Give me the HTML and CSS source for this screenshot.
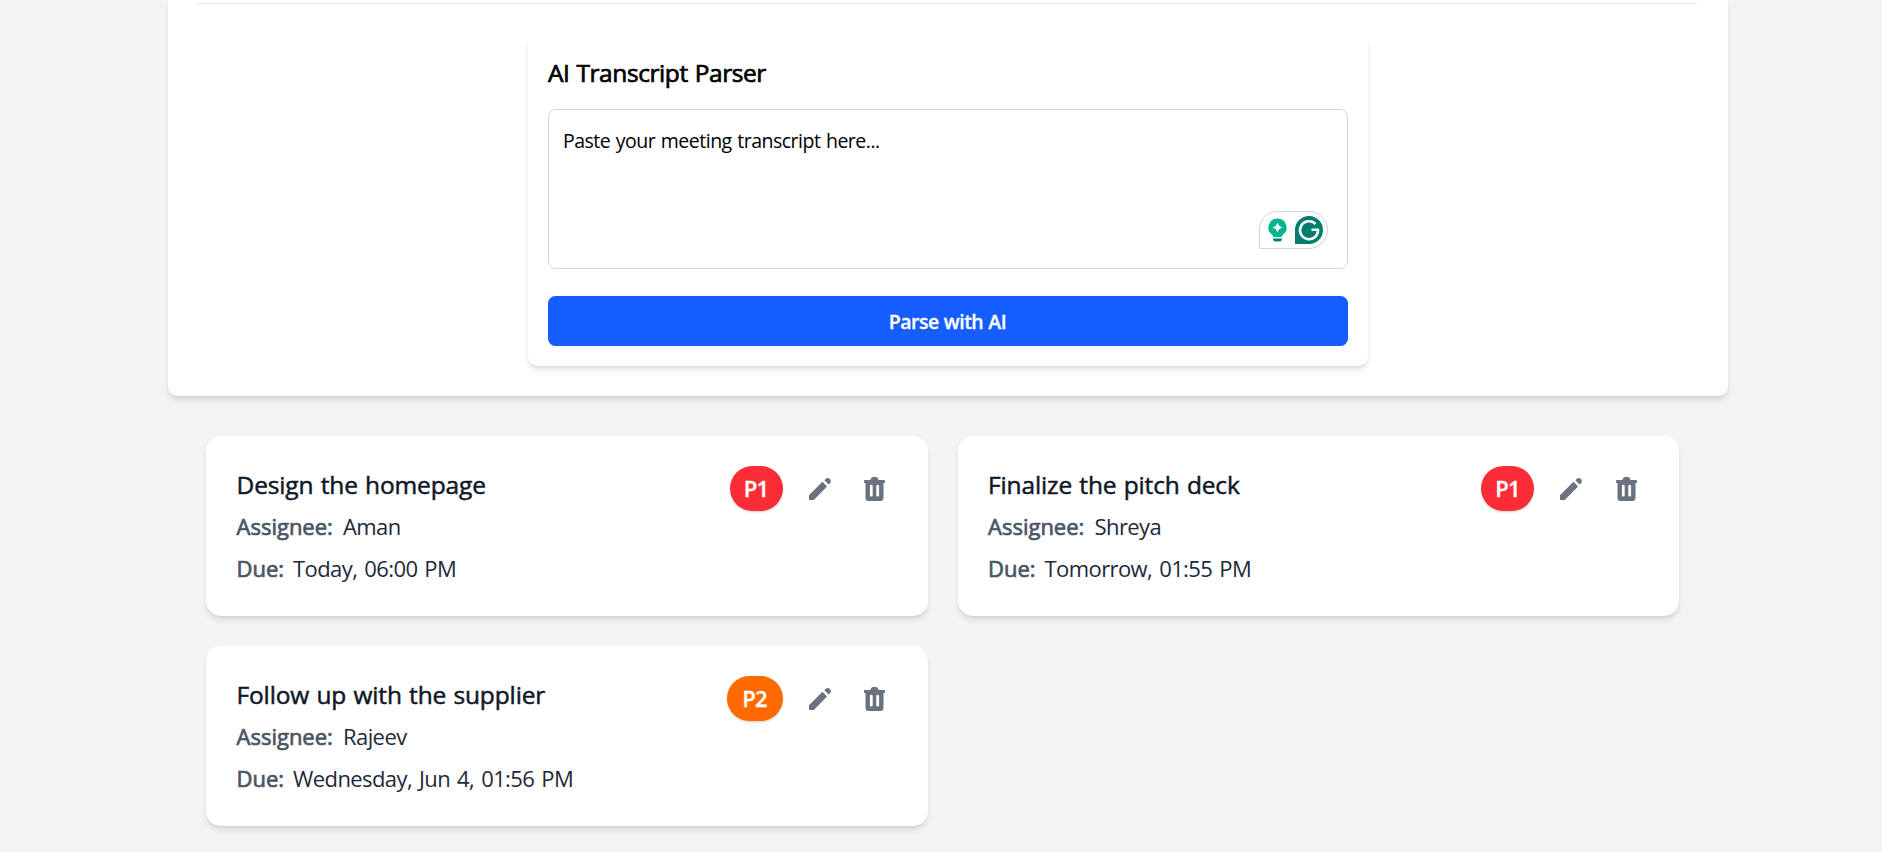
FILE: index.html
```html
<!DOCTYPE html>
<html lang="en">
<head>
<meta charset="utf-8">
<title>AI Task Manager</title>
<link rel="stylesheet" href="styles.css">
</head>
<body>
<svg class="sprite" aria-hidden="true">
  <symbol id="pencil" viewBox="0 0 24 24"><path d="M1 18.2 13.9 5.3a.8.8 0 0 1 1.1 0l3.6 3.6a.8.8 0 0 1 0 1.100L5.800 23H1.700a.7.700 0 0 1-.7-.7ZM16.300 3.200 17.800 1.800C19.100.700 20.900.800 22 2s1.200 2.900 0 4.200L20.600 7.500Z"/></symbol>
  <symbol id="trash" viewBox="0 0 21 24"><path fill-rule="evenodd" d="M6.200 3 7.500.8Q8 0 9 0h3q1 0 1.500.8L14.800 3h5.400a.8.8 0 0 1 .8.8v1.400a.8.8 0 0 1-.8.8H19.500v15a3 3 0 0 1-3 3h-12a3 3 0 0 1-3-3V6H.8a.8.8 0 0 1-.8-.8V3.800A.8.8 0 0 1 .8 3ZM7.300 7.800a1.400 1.400 0 0 0-1.400 1.400v9a1.400 1.400 0 0 0 2.800 0v-9a1.400 1.400 0 0 0-1.400-1.400Zm6.400 0a1.400 1.400 0 0 0-1.400 1.400v9a1.400 1.400 0 0 0 2.800 0v-9a1.400 1.400 0 0 0-1.400-1.400Z"/></symbol>
</svg>
<main class="page">
  <section class="panel">
    <hr class="divider">
    <div class="parser">
      <h2 class="parser-title">AI Transcript Parser</h2>
      <div class="field">
        <span class="field-text">Paste your meeting transcript here...</span>
        <svg class="assistant" viewBox="0 0 70 38">
          <path d="M.5 37.500V18A17.500 17.500 0 0 1 18 .500H50A18.500 18.500 0 0 1 50 37.500Z" fill="#fff" stroke="#cfd2e0"/>
          <path d="M18.500 7.500a9 9 0 0 1 5.300 16.300l-1.300 2.200h-8l-1.300-2.200A9 9 0 0 1 18.500 7.500Z" fill="#06b491"/>
          <path d="M18.500 11.500q1 4 5 5-4 1-5 5-1-4-5-5 4-1 5-5Z" fill="#fff"/>
          <path d="M14 27.500h9v.8a2.500 2.500 0 0 1-2.500 2.200h-4a2.500 2.500 0 0 1-2.500-2.200Z" fill="#027e6f"/>
          <path d="M36 33V18.500A14 14 0 1 1 50 33Z" fill="#027e6f"/>
          <path d="M56.500 13A9 9 0 1 0 59 18.800M52.500 18.800H60" fill="none" stroke="#fff" stroke-width="2.600"/>
        </svg>
      </div>
      <button class="parse">Parse with AI</button>
    </div>
  </section>
  <section class="tasks">
    <article class="task">
      <div class="info">
        <h3 class="title">Design the homepage</h3>
        <p class="row"><span class="label">Assignee:</span><span class="value">Aman</span></p>
        <p class="row"><span class="label due">Due:</span><span class="value">Today, 06:00 PM</span></p>
      </div>
      <div class="actions"><span class="badge p1">P1</span><button class="icon"><svg class="pencil"><use href="#pencil"/></svg></button><button class="icon"><svg class="trash"><use href="#trash"/></svg></button></div>
    </article>
    <article class="task">
      <div class="info">
        <h3 class="title">Finalize the pitch deck</h3>
        <p class="row"><span class="label">Assignee:</span><span class="value">Shreya</span></p>
        <p class="row"><span class="label due">Due:</span><span class="value">Tomorrow, 01:55 PM</span></p>
      </div>
      <div class="actions"><span class="badge p1">P1</span><button class="icon"><svg class="pencil"><use href="#pencil"/></svg></button><button class="icon"><svg class="trash"><use href="#trash"/></svg></button></div>
    </article>
    <article class="task">
      <div class="info">
        <h3 class="title">Follow up with the supplier</h3>
        <p class="row"><span class="label">Assignee:</span><span class="value">Rajeev</span></p>
        <p class="row"><span class="label due">Due:</span><span class="value">Wednesday, Jun 4, 01:56 PM</span></p>
      </div>
      <div class="actions"><span class="badge p2">P2</span><button class="icon"><svg class="pencil"><use href="#pencil"/></svg></button><button class="icon"><svg class="trash"><use href="#trash"/></svg></button></div>
    </article>
  </section>
</main>
</body>
</html>
```
FILE: styles.css
```css
* { box-sizing: border-box; margin: 0; padding: 0; }
body { background: #f3f4f6; font-family: "Segoe UI", "Open Sans", sans-serif; color: #000; overflow: hidden; }
button { border: 0; background: none; font: inherit; }
.sprite { display: none; }
.page { height: 852px; overflow: hidden; }
.panel { width: 1560px; height: 396px; margin-left: 168px; padding: 3px 31px 0 30px; background: #fff; border-radius: 0 0 10px 10px; box-shadow: 0 5px 7.500px -1px rgba(0,0,0,.1), 0 2.500px 5px -2.500px rgba(0,0,0,.1); }
.divider { border: 0; height: 1px; background: #e5e7eb; }
.parser { width: 840px; height: 332px; margin: 30px 0 0 330px; padding: 21px 20px 20px; background: #fff; border-radius: 10px; box-shadow: 0 5px 7.500px -1px rgba(0,0,0,.1), 0 2.500px 5px -2.500px rgba(0,0,0,.1); display: flex; flex-direction: column; }
.parser-title { font-size: 24.500px; font-weight: 400; -webkit-text-stroke: .7px #000; line-height: 35px; letter-spacing: -.42px; word-spacing: 1px; margin-bottom: 19px; }
.field { position: relative; height: 160px; padding: 15px 14px; border: 1px solid #d1d5dc; border-radius: 7.500px; }
.field-text { display: block; font-size: 19.500px; line-height: 32px; letter-spacing: -.5px; word-spacing: 1px; white-space: nowrap; }
.assistant { position: absolute; right: 18px; bottom: 19px; width: 70px; height: 38px; }
.parse { height: 50px; margin-top: 27px; border-radius: 7.500px; background: #155dfc; color: #fff; font-size: 19.500px; font-weight: 600; -webkit-text-stroke: .3px #fff; letter-spacing: -.5px; word-spacing: .5px; line-height: 50px; padding: 1px 1px 0 0; }
.tasks { display: grid; grid-template-columns: repeat(2, 721.500px); gap: 30px; padding: 40px 0 0 206px; }
.task { display: flex; justify-content: space-between; height: 180px; padding: 30px; background: #fff; border-radius: 15px; box-shadow: 0 5px 7.500px -1px rgba(0,0,0,.1), 0 2.500px 5px -2.500px rgba(0,0,0,.1); }
.info { display: flex; flex-direction: column; gap: 7px; padding: 1px 0 0 .5px; white-space: nowrap; }
.title { font-size: 24.500px; font-weight: 400; -webkit-text-stroke: .5px #101828; line-height: 35px; letter-spacing: -.13px; word-spacing: 1px; color: #101828; }
.row { display: flex; font-size: 22px; line-height: 35px; color: #1e2939; }
.label { width: 106.500px; font-weight: 400; -webkit-text-stroke: .7px #4a5565; color: #4a5565; }
.due { width: 56.500px; }
.value { letter-spacing: -.58px; word-spacing: 1.800px; }
.actions { display: flex; align-items: center; height: 45px; }
.badge { width: 53px; height: 45px; border-radius: 22.500px; line-height: 45px; text-align: center; color: #fff; font-size: 22px; font-weight: 600; -webkit-text-stroke: .3px #fff; letter-spacing: -.8px; margin-right: 14px; box-shadow: 0 1px 3px rgba(0,0,0,.1), 0 1px 2px rgba(0,0,0,.1); }
.p1 { background: #fb2c36; }
.p2 { background: #ff6900; width: 56px; }
.icon { display: flex; align-items: center; justify-content: center; width: 46px; height: 46px; color: #6a7282; }
.icon + .icon { margin-left: 9px; }
.icon svg { fill: currentColor; }
.pencil { width: 24px; height: 24px; }
.trash { width: 21px; height: 24px; }
```
